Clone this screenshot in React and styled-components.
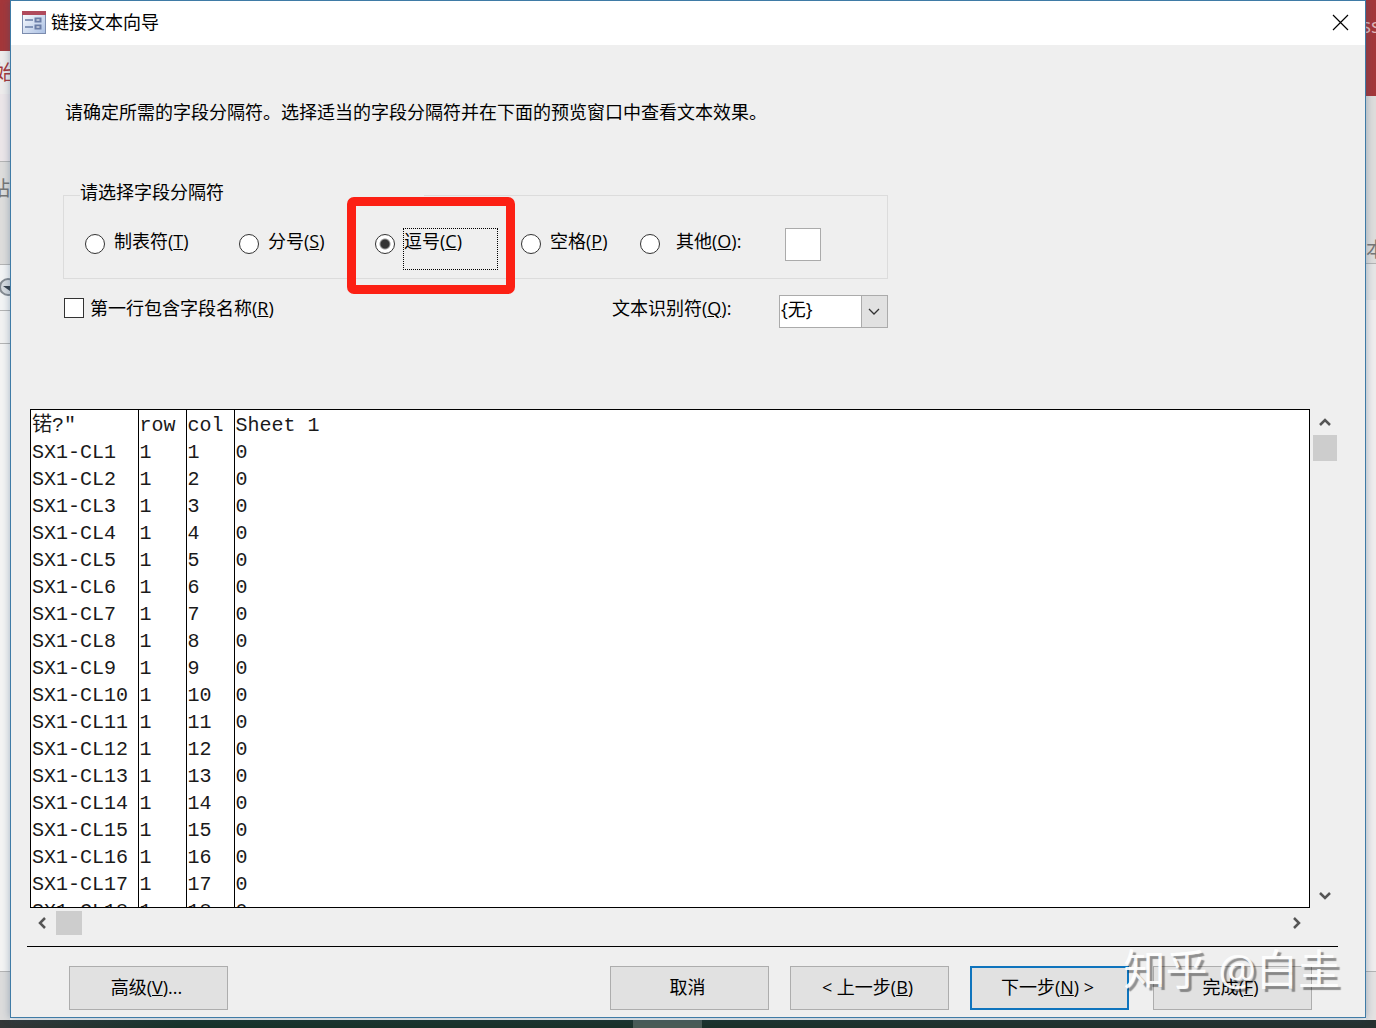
import React from "react"
import styled, { createGlobalStyle, css } from "styled-components"

const GlobalStyle = createGlobalStyle`
  * {
    box-sizing: border-box;
  }
  body {
    margin: 0;
    color: #000;
    font-family: "Open Sans", "Noto Sans CJK SC", sans-serif;
    font-size: 18px;
    line-height: 26px;
  }
  button, input, select {
    margin: 0;
    font: inherit;
    color: inherit;
  }
`

const Desktop = styled.div`
  display: grid;
  grid-template-columns: 10px minmax(0, 1fr) 10px;
  grid-template-rows: minmax(0, 1fr) 8px;
  height: 100vh;
  overflow: hidden;
  background: #f4f4f4;
`

const Strip = styled.div`
  display: flex;
  flex-direction: column;
  overflow: hidden;
  font-size: 20px;
`

const Band = styled.div`
  display: flex;
  flex: ${(p) => (p.$height ? "none" : "1")};
  align-items: ${(p) => p.$align || "center"};
  justify-content: ${(p) => p.$justify || "flex-end"};
  height: ${(p) => p.$height}px;
  padding-top: ${(p) => p.$top || 0}px;
  border-bottom: ${(p) => (p.$line ? "1px solid #b4b4b4" : "none")};
  background: ${(p) => p.$bg};
  color: ${(p) => p.$color || "#777"};
  white-space: nowrap;
`

const Taskbar = styled.div`
  display: grid;
  grid-column: 1 / -1;
  grid-template-columns: 46fr 5fr 49fr;
  background: linear-gradient(90deg, #333738, #18332b 13%, #1c312b 55%, #263130);
`

const TaskItem = styled.div`
  grid-column: 2;
  background: #4b5c57;
`

const Dialog = styled.main`
  position: relative;
  display: flex;
  flex-direction: column;
  min-height: 0;
  margin-bottom: 2px;
  border: 1px solid #3f7ba6;
  background: #efefef;
  box-shadow: 0 0 8px rgba(40, 80, 120, 0.4);
`

const TitleBar = styled.header`
  display: flex;
  align-items: center;
  gap: 5px;
  height: 44px;
  padding: 0 16px 2px 11px;
  background: #fff;
  h1 {
    flex: 1;
    margin: 0;
    font-size: 18px;
    font-weight: 400;
  }
`

const CloseButton = styled.button`
  display: flex;
  padding: 0;
  border: 0;
  background: none;
`

const Form = styled.form`
  display: flex;
  flex: 1;
  flex-direction: column;
  min-height: 0;
  padding: 54px 27px 7px 16px;
`

const Options = styled.section`
  width: 825px;
  margin: 0 0 81px 36px;
  p {
    margin: 0 0 56px 2px;
  }
`

const Delimiters = styled.fieldset`
  height: 98px;
  min-width: 0;
  margin: 0;
  padding: 0 0 0 21px;
  border: 1px solid #dcdcdc;
  legend {
    width: 344px;
    height: 28px;
    margin-left: -5px;
    padding: 0;
    line-height: 22px;
  }
`

const Choices = styled.div`
  display: grid;
  grid-template-columns: 154px 136px 146px 119px 145px 36px;
  margin-top: 19px;
`

const Choice = styled.label`
  position: relative;
  display: flex;
  align-items: flex-start;
  gap: ${(p) => (p.$wide ? "15px" : "8px")};
`

const ChoiceText = styled.span`
  width: ${(p) => (p.$focused ? "95px" : "auto")};
  height: 42px;
  border: 1px dotted ${(p) => (p.$focused ? "#000" : "transparent")};
  line-height: 24px;
  white-space: nowrap;
`

const Radio = styled.input`
  flex: none;
  width: 20px;
  height: 20px;
  margin-top: 6px;
  appearance: none;
  border: 1px solid #333;
  border-radius: 50%;
  background: #fff;
  &:checked {
    background: radial-gradient(circle, #333 4px, #fff 6px);
  }
`

const Highlight = styled.span`
  position: absolute;
  top: -31px;
  left: -28px;
  width: 168px;
  height: 97px;
  border: 9px solid #fc2014;
  border-radius: 7px;
  pointer-events: none;
`

const OtherInput = styled.input`
  width: 36px;
  height: 33px;
  padding: 2px;
  border: 1px solid #ababab;
  background: #fff;
`

const SourceRow = styled.div`
  display: flex;
  align-items: flex-start;
  justify-content: space-between;
  margin-top: 16px;
`

const CheckLabel = styled.label`
  display: flex;
  align-items: center;
  gap: 6px;
  margin-left: 1px;
`

const Checkbox = styled.input`
  width: 20px;
  height: 20px;
  appearance: none;
  border: 1px solid #333;
  background: #fff;
`

const Qualifier = styled.div`
  display: flex;
  justify-content: space-between;
  width: 276px;
`

const SelectBox = styled.div`
  display: grid;
  width: 109px;
  height: 33px;
  select,
  span {
    grid-area: 1 / 1;
  }
  select {
    padding: 0 0 5px 1px;
    appearance: none;
    border: 1px solid #ababab;
    border-radius: 0;
    background: #fff;
  }
  span {
    display: flex;
    align-items: center;
    justify-content: center;
    justify-self: end;
    width: 27px;
    padding-right: 2px;
    border: 1px solid #ababab;
    background: #e1e1e1;
    pointer-events: none;
  }
`

const Preview = styled.section`
  display: grid;
  flex: 1;
  grid-template-columns: minmax(0, 1fr) 24px;
  grid-template-rows: minmax(0, 1fr) 24px;
  gap: 3px;
  min-height: 0;
  padding: 0 1px 0 3px;
`

const Sheet = styled.div`
  display: flex;
  overflow: hidden;
  border: 1px solid #000;
  background: #fff;
`

const Table = styled.table`
  width: 100%;
  border-collapse: collapse;
  table-layout: fixed;
  color: #1a1a1a;
  font-family: "Liberation Mono", "Noto Sans CJK SC", monospace;
  font-size: 20px;
  line-height: 27px;
  th,
  td {
    height: 27px;
    padding: 0 0 0 1px;
    font-weight: 400;
    text-align: left;
    white-space: nowrap;
  }
  th + th,
  td + td {
    border-left: 1px solid #000;
  }
  thead th {
    height: 29px;
    padding-top: 2px;
  }
`

const vertical = css`
  flex-direction: column;
  width: 24px;
`

const ScrollBar = styled.div`
  display: flex;
  align-items: center;
  ${(p) => p.$vertical && vertical}
`

const ScrollArrow = styled.button`
  display: flex;
  align-items: center;
  justify-content: center;
  width: 26px;
  height: 26px;
  padding: 0;
  border: 0;
  background: none;
  color: #555;
`

const Thumb = styled.div`
  width: ${(p) => (p.$vertical ? "24px" : "26px")};
  height: ${(p) => (p.$vertical ? "26px" : "24px")};
  margin-${(p) => (p.$vertical ? "bottom" : "right")}: auto;
  background: #cdcdcd;
`

const Footer = styled.footer`
  display: flex;
  justify-content: space-between;
  margin-top: 11px;
  padding: 19px 26px 0 42px;
  border-top: 1px solid #000;
`

const Steps = styled.div`
  display: flex;
  gap: 21px;
  margin: 0 24px 0 auto;
`

const Button = styled.button`
  width: 159px;
  height: 44px;
  padding: 0 4px 2px 0;
  border: ${(p) => (p.$primary ? "2px solid #0f74bd" : "1px solid #adadad")};
  background: #e1e1e1;
`

const Watermark = styled.div`
  position: absolute;
  right: 25px;
  bottom: 18px;
  color: rgba(255, 255, 255, 0.92);
  font-size: 42px;
  line-height: 60px;
  text-shadow: 3px 3px 1px rgba(0, 0, 0, 0.4);
  white-space: nowrap;
  pointer-events: none;
`

const arrows = {
  up: "M1 9 6 4 11 9",
  down: "M1 4 6 9 11 4",
  left: "M8 1 3 6 8 11",
  right: "M3 1 8 6 3 11",
}

function Arrow({ dir }) {
  return (
    <ScrollArrow type="button" aria-label={dir}>
      <svg width="12" height="12" fill="none" stroke="currentColor" strokeWidth="2.5">
        <path d={arrows[dir]} />
      </svg>
    </ScrollArrow>
  )
}

function FormIcon() {
  return (
    <svg width="24" height="23" viewBox="0 0 24 23">
      <defs>
        <linearGradient id="form-bg" x1="0" y1="0" x2="1" y2="1">
          <stop offset="0" stopColor="#fff" />
          <stop offset="1" stopColor="#a9bfe3" />
        </linearGradient>
      </defs>
      <rect x=".5" y=".5" width="23" height="22" fill="url(#form-bg)" stroke="#7c8cae" />
      <rect width="24" height="4" fill="#b04a5c" />
      <path d="M3 9h8M3 16h8" stroke="#6a7da6" strokeWidth="1.5" />
      <path d="M13.500 7.500h5v3h-5zM13.500 14.500h5v3h-5z" fill="#fff" stroke="#6a7da6" strokeWidth="2" />
    </svg>
  )
}

const rows = Array.from({ length: 18 }, (_, i) => i + 1)

export default function App() {
  return (
    <>
      <GlobalStyle />
      <Desktop>
        <Strip>
          <Band $height={51} $bg="#a4373a" />
          <Band $height={43} $bg="#eeecec" $color="#a4373a" $justify="center">
            始
          </Band>
          <Band $height={68} $bg="#ece6e9" $line />
          <Band $height={103} $bg="#dedddc" $line $align="flex-start" $top={14}>
            粘
          </Band>
          <Band $height={46} $bg="#f3f4f5" $line>
            <svg width="10" height="20" fill="#d7dbe0" stroke="#858b92" strokeWidth="2">
              <circle cx="8" cy="9" r="8" />
              <path d="M3 8h7v5z" fill="#39424d" stroke="none" />
            </svg>
          </Band>
          <Band $height={33} $bg="#f2f2f2" $line />
          <Band $bg="#f4f4f4" $line />
          <Band $height={48} $bg="#dcdcdc" />
        </Strip>

        <Dialog>
          <TitleBar>
            <FormIcon />
            <h1>链接文本向导</h1>
            <CloseButton type="button" aria-label="关闭">
              <svg width="18" height="18" stroke="#000" strokeWidth="1.2">
                <path d="M2 2 17 17M17 2 2 17" />
              </svg>
            </CloseButton>
          </TitleBar>

          <Form onSubmit={(e) => e.preventDefault()}>
            <Options>
              <p>请确定所需的字段分隔符。选择适当的字段分隔符并在下面的预览窗口中查看文本效果。</p>
              <Delimiters>
                <legend>请选择字段分隔符</legend>
                <Choices>
                  <Choice>
                    <Radio type="radio" name="delimiter" />
                    <ChoiceText>
                      制表符(<u>T</u>)
                    </ChoiceText>
                  </Choice>
                  <Choice>
                    <Radio type="radio" name="delimiter" />
                    <ChoiceText>
                      分号(<u>S</u>)
                    </ChoiceText>
                  </Choice>
                  <Choice>
                    <Radio type="radio" name="delimiter" defaultChecked />
                    <ChoiceText $focused>
                      逗号(<u>C</u>)
                    </ChoiceText>
                    <Highlight />
                  </Choice>
                  <Choice>
                    <Radio type="radio" name="delimiter" />
                    <ChoiceText>
                      空格(<u>P</u>)
                    </ChoiceText>
                  </Choice>
                  <Choice $wide>
                    <Radio type="radio" name="delimiter" />
                    <ChoiceText>
                      其他(<u>O</u>):
                    </ChoiceText>
                  </Choice>
                  <OtherInput type="text" aria-label="其他" />
                </Choices>
              </Delimiters>
              <SourceRow>
                <CheckLabel>
                  <Checkbox type="checkbox" />
                  <span>
                    第一行包含字段名称(<u>R</u>)
                  </span>
                </CheckLabel>
                <Qualifier>
                  <label htmlFor="qualifier">
                    文本识别符(<u>Q</u>):
                  </label>
                  <SelectBox>
                    <select id="qualifier">
                      <option>{"{无}"}</option>
                    </select>
                    <span>
                      <svg width="12" height="8" fill="none" stroke="#333" strokeWidth="1.3">
                        <path d="M1 1 6 6 11 1" />
                      </svg>
                    </span>
                  </SelectBox>
                </Qualifier>
              </SourceRow>
            </Options>

            <Preview>
              <Sheet>
                <Table>
                  <colgroup>
                    <col width="107" />
                    <col width="48" />
                    <col width="48" />
                    <col />
                  </colgroup>
                  <thead>
                    <tr>
                      <th>锘?″</th>
                      <th>row</th>
                      <th>col</th>
                      <th>Sheet 1</th>
                    </tr>
                  </thead>
                  <tbody>
                    {rows.map((n) => (
                      <tr key={n}>
                        <td>SX1-CL{n}</td>
                        <td>1</td>
                        <td>{n}</td>
                        <td>0</td>
                      </tr>
                    ))}
                  </tbody>
                </Table>
              </Sheet>
              <ScrollBar $vertical>
                <Arrow dir="up" />
                <Thumb $vertical />
                <Arrow dir="down" />
              </ScrollBar>
              <ScrollBar>
                <Arrow dir="left" />
                <Thumb />
                <Arrow dir="right" />
              </ScrollBar>
            </Preview>

            <Footer>
              <Button type="button">
                高级(<u>V</u>)...
              </Button>
              <Steps>
                <Button type="button">取消</Button>
                <Button type="button">
                  &lt; 上一步(<u>B</u>)
                </Button>
                <Button type="submit" $primary>
                  下一步(<u>N</u>) &gt;
                </Button>
              </Steps>
              <Button type="button">
                完成(<u>F</u>)
              </Button>
            </Footer>
          </Form>
          <Watermark>知乎 @白圭</Watermark>
        </Dialog>

        <Strip>
          <Band $height={96} $bg="#a4373a" $color="#e0b9ba" $align="flex-start" $justify="center" $top={13}>
            ss
          </Band>
          <Band $height={168} $bg="#dedddc" $line $align="flex-end" $justify="flex-start">
            本
          </Band>
          <Band $height={36} $bg="#e6e6e6" />
          <Band $bg="#f0eeee" $line />
          <Band $height={48} $bg="#e4e2e2" />
        </Strip>
        <Taskbar>
          <TaskItem />
        </Taskbar>
      </Desktop>
    </>
  )
}
